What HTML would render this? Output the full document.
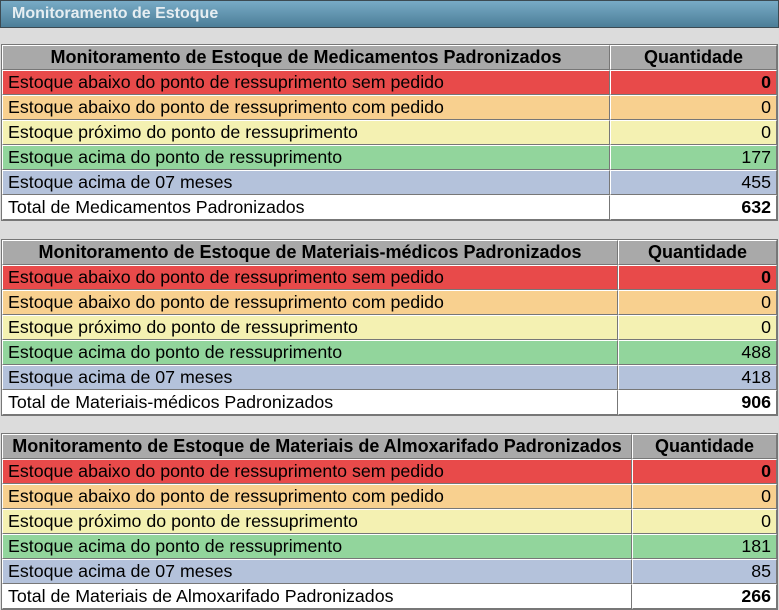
<!DOCTYPE html>
<html><head><style>
body{margin:0;width:779px;height:610px;background:#dcdcdc;font-family:"Liberation Sans",Arial,sans-serif;overflow:hidden;position:relative}
.bar{position:absolute;left:0;top:0;width:777px;height:26px;border:1px solid #3c4a52;background:linear-gradient(#78abc6,#4c7e98);}
.bar span{position:absolute;left:11px;top:4px;color:#e6eef2;font-weight:bold;font-size:16px}
table{position:absolute;left:1px;width:777px;border-collapse:separate;border-spacing:0;border:1px solid #777;background:#fff;font-size:17.8px}
td,th{height:23px;padding:0 5px;border-top:1px solid #fff;border-left:1px solid #fff;border-right:1px solid #777;border-bottom:1px solid #777;white-space:nowrap;line-height:23px}
th{background:#a9a9a9;font-weight:bold;font-size:18px}
td.n{text-align:right}
.r td{background:#e84a4a}.o td{background:#f8d08f}.y td{background:#f4f1b2}.g td{background:#92d59c}.b td{background:#b4c2db}.w td{background:#fff}
</style></head><body>
<div class="bar"><span>Monitoramento de Estoque</span></div>
<table style="top:44px"><tr><th>Monitoramento de Estoque de Medicamentos Padronizados</th><th style="width:155px">Quantidade</th></tr>
<tr class="r"><td>Estoque abaixo do ponto de ressuprimento sem pedido</td><td class="n"><b>0</b></td></tr>
<tr class="o"><td>Estoque abaixo do ponto de ressuprimento com pedido</td><td class="n">0</td></tr>
<tr class="y"><td>Estoque próximo do ponto de ressuprimento</td><td class="n">0</td></tr>
<tr class="g"><td>Estoque acima do ponto de ressuprimento</td><td class="n">177</td></tr>
<tr class="b"><td>Estoque acima de 07 meses</td><td class="n">455</td></tr>
<tr class="w"><td>Total de Medicamentos Padronizados</td><td class="n"><b>632</b></td></tr></table>
<table style="top:239px"><tr><th>Monitoramento de Estoque de Materiais-médicos Padronizados</th><th style="width:147px">Quantidade</th></tr>
<tr class="r"><td>Estoque abaixo do ponto de ressuprimento sem pedido</td><td class="n"><b>0</b></td></tr>
<tr class="o"><td>Estoque abaixo do ponto de ressuprimento com pedido</td><td class="n">0</td></tr>
<tr class="y"><td>Estoque próximo do ponto de ressuprimento</td><td class="n">0</td></tr>
<tr class="g"><td>Estoque acima do ponto de ressuprimento</td><td class="n">488</td></tr>
<tr class="b"><td>Estoque acima de 07 meses</td><td class="n">418</td></tr>
<tr class="w"><td>Total de Materiais-médicos Padronizados</td><td class="n"><b>906</b></td></tr></table>
<table style="top:433px"><tr><th>Monitoramento de Estoque de Materiais de Almoxarifado Padronizados</th><th style="width:133px">Quantidade</th></tr>
<tr class="r"><td>Estoque abaixo do ponto de ressuprimento sem pedido</td><td class="n"><b>0</b></td></tr>
<tr class="o"><td>Estoque abaixo do ponto de ressuprimento com pedido</td><td class="n">0</td></tr>
<tr class="y"><td>Estoque próximo do ponto de ressuprimento</td><td class="n">0</td></tr>
<tr class="g"><td>Estoque acima do ponto de ressuprimento</td><td class="n">181</td></tr>
<tr class="b"><td>Estoque acima de 07 meses</td><td class="n">85</td></tr>
<tr class="w"><td>Total de Materiais de Almoxarifado Padronizados</td><td class="n"><b>266</b></td></tr></table>
</body></html>
